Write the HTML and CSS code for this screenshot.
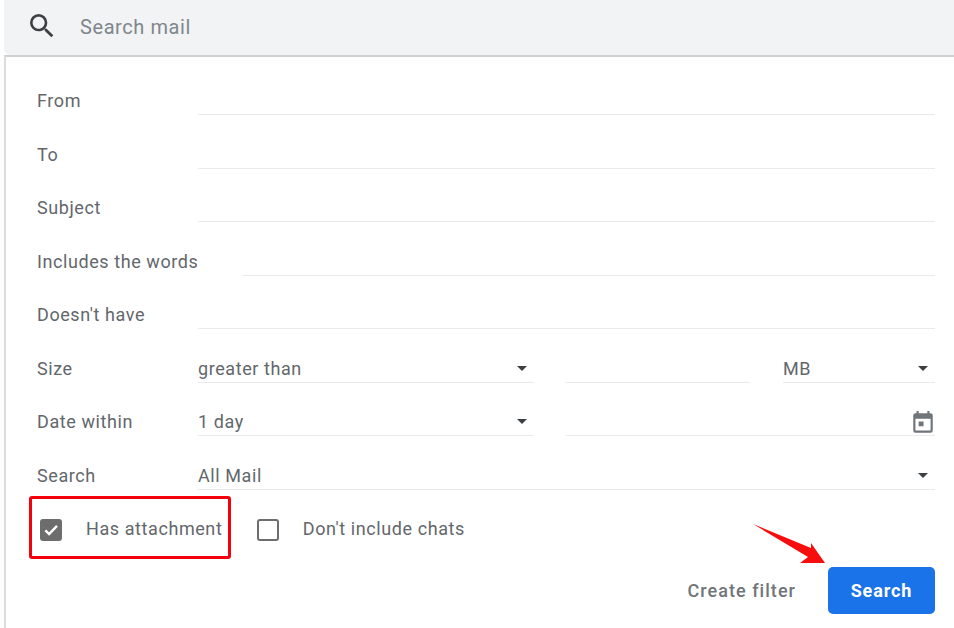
FILE: index.html
```html
<!DOCTYPE html>
<html lang="en">
<head>
<meta charset="utf-8">
<title>Search mail</title>
<link rel="stylesheet" href="styles.css">
</head>
<body>
<header class="searchbar">
  <svg class="search-icon" viewBox="0 0 24 24" width="32" height="32"><path fill="#3c4043" d="M15.5 14h-.79l-.28-.27A6.47 6.47 0 0 0 16 9.5 6.5 6.5 0 1 0 9.5 16c1.61 0 3.09-.59 4.23-1.57l.27.28v.79l5 4.99L20.49 19l-4.99-5zm-6 0C7.01 14 5 11.99 5 9.5S7.01 5 9.5 5 14 7.01 14 9.5 11.99 14 9.5 14z"/></svg>
  <span class="search-text">Search mail</span>
</header>
<main class="panel">
  <div class="row"><span class="label">From</span><span class="field"></span></div>
  <div class="row"><span class="label">To</span><span class="field"></span></div>
  <div class="row"><span class="label">Subject</span><span class="field"></span></div>
  <div class="row"><span class="label label-auto">Includes the words</span><span class="field"></span></div>
  <div class="row"><span class="label">Doesn't have</span><span class="field"></span></div>
  <div class="row">
    <span class="label">Size</span>
    <span class="field select sel-main">greater than<i class="caret"></i></span>
    <span class="field num"></span>
    <span class="field select sel-unit">MB<i class="caret"></i></span>
  </div>
  <div class="row">
    <span class="label">Date within</span>
    <span class="field select sel-main">1 day<i class="caret"></i></span>
    <span class="field date">
      <svg class="cal" viewBox="0 0 24 24" width="26" height="26"><path fill="#70757a" d="M19 3h-1V1h-2v2H8V1H6v2H5a2 2 0 0 0-2 2v14a2 2 0 0 0 2 2h14a2 2 0 0 0 2-2V5a2 2 0 0 0-2-2zm0 16H5V8h14v11zM8 10.5h4.500v4.500H8z"/></svg>
    </span>
  </div>
  <div class="row"><span class="label">Search</span><span class="field select">All Mail<i class="caret"></i></span></div>
  <div class="checks">
    <label class="check">
      <span class="box box-on"><svg viewBox="0 0 24 24" width="22" height="22"><path fill="none" stroke="#fff" stroke-width="3.200" d="M4.500 12.500l5 5L20 6.500"/></svg></span>
      <span>Has attachment</span>
    </label>
    <label class="check">
      <span class="box"></span>
      <span>Don't include chats</span>
    </label>
  </div>
  <div class="actions">
    <span class="create">Create filter</span>
    <button class="search-btn">Search</button>
  </div>
  <div class="highlight"></div>
  <svg class="arrow" viewBox="0 0 80 50" width="80" height="50"><path fill="#f60d0d" d="M0 1 L58 25 L58 20 L72 40 L47 40 L55 34 Z"/></svg>
</main>
</body>
</html>
```
FILE: styles.css
```css
* { box-sizing: border-box; }
html, body { margin: 0; height: 100%; overflow: hidden; }
body {
  background: #fff;
  font-family: Roboto, "Liberation Sans", sans-serif;
  font-size: 18px;
  letter-spacing: .58px;
  color: #63676b;
}
.searchbar {
  height: 55px;
  margin-left: 4px;
  background: #f1f3f4;
  border-bottom-left-radius: 6px;
  display: flex;
  align-items: center;
  padding: 0 0 2px 22px;
}
.search-icon { margin-top: -2px; }
.search-text { margin-left: 22px; font-size: 20px; color: #80868b; }
.panel {
  position: relative;
  margin-left: 4px;
  height: 573px;
  border-top: 2px solid #cfcfcf;
  border-left: 2px solid #dcdcdc;
  padding: 31px 19px 0 31px;
}
.row {
  display: flex;
  align-items: flex-end;
  height: 53.5px;
}
.row:first-child { height: 27px; }
.label { flex: 0 0 161px; line-height: 28px; }
.label-auto { flex-basis: 205px; }
.field {
  flex: 1;
  display: flex;
  align-items: center;
  justify-content: space-between;
  height: 28px;
  border-bottom: 1px solid #e8eaed;
}
.select { padding-right: 7px; }
.sel-main { flex: 0 0 336px; }
.num { flex: 0 0 184px; margin-left: 32px; }
.sel-unit { flex: 0 0 152px; margin-left: 33px; }
.date { margin-left: 32px; justify-content: flex-end; }
.caret {
  width: 0; height: 0;
  border-left: 5.5px solid transparent;
  border-right: 5.5px solid transparent;
  border-top: 5.5px solid #3c4043;
}
.cal { margin-right: -1px; margin-bottom: -2px; }
.checks { display: flex; gap: 34.4px; margin-top: 25px; padding-left: 3px; }
.check { display: flex; align-items: center; gap: 24px; height: 28px; }
.box {
  width: 22px; height: 22px;
  margin-top: 2px;
  border: 2px solid #6d6d6d;
  border-radius: 3px;
  display: flex;
  align-items: center;
  justify-content: center;
}
.box-on { background: #6d6d6d; }
.actions {
  display: flex;
  justify-content: flex-end;
  align-items: center;
  gap: 32px;
  margin-top: 24.5px;
}
.create { font-size: 18px; font-weight: 500; letter-spacing: 1.05px; color: #70757a; }
.search-btn {
  width: 107px; height: 47px;
  border: 0;
  border-radius: 5px;
  background: #1a73e8;
  color: #fff;
  font: 700 18px Roboto, "Liberation Sans", sans-serif;
  letter-spacing: .9px;
}
.highlight {
  position: absolute;
  left: 23px; top: 439px;
  width: 202px; height: 63px;
  border: 3px solid #f5000d;
  border-radius: 3px;
}
.arrow { position: absolute; left: 747px; top: 466px; }
```
